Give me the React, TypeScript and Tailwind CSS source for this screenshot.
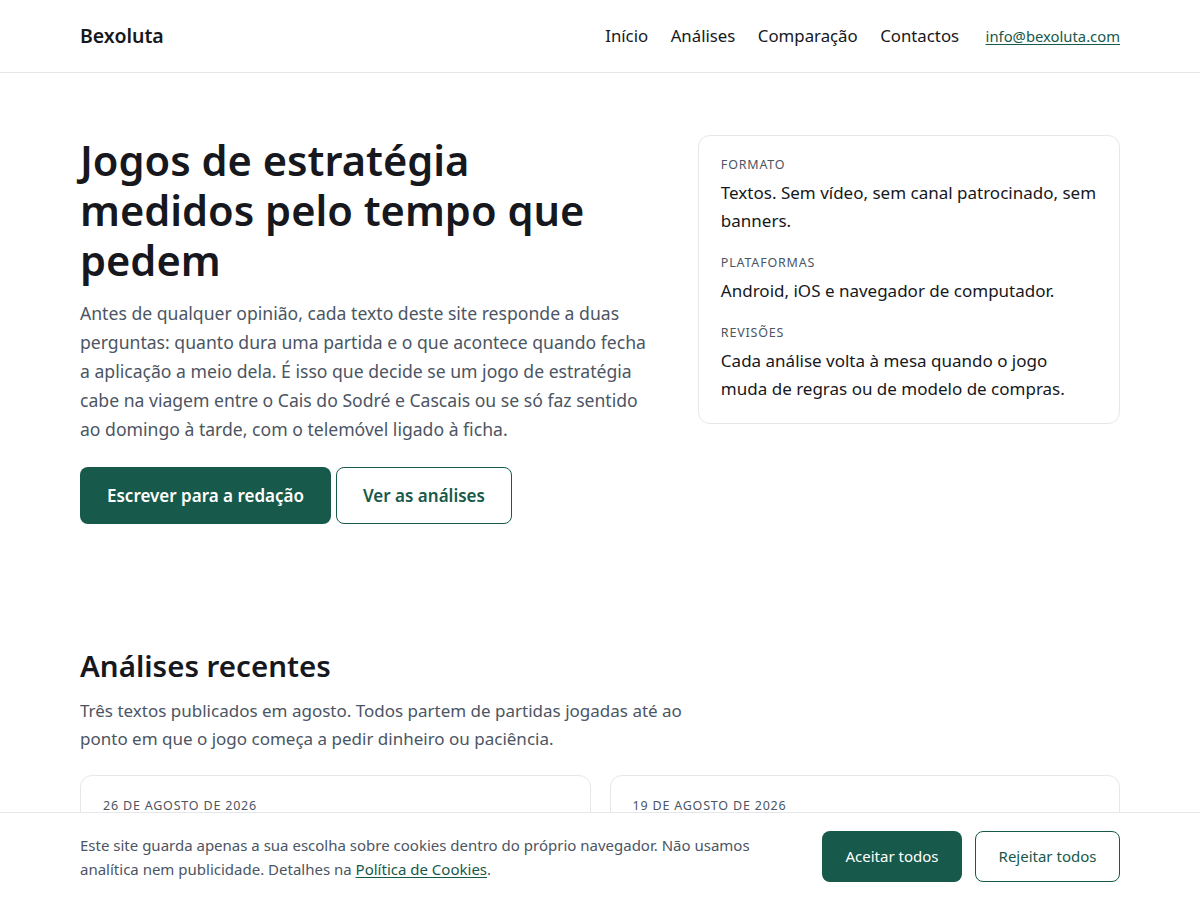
import React from "react";

export default function App() {
  const font = { fontFamily: '"Noto Sans", "Open Sans", sans-serif' };
  return (
    <div className="min-h-screen bg-white text-[#16181d]" style={font}>
      <header className="border-b border-[#e5e7eb]">
        <div className="mx-auto flex h-[72px] w-[1040px] items-center justify-between">
          <div className="text-[19.5px] font-semibold leading-none">Bexoluta</div>
          <nav className="flex items-center gap-[22.5px] text-[16.8px]">
            <a href="#">Início</a>
            <a href="#">Análises</a>
            <a href="#">Comparação</a>
            <a href="#">Contactos</a>
            <a href="#" className="ml-[4px] text-[14.8px] text-[#17594a] underline underline-offset-2">
              info@bexoluta.com
            </a>
          </nav>
        </div>
      </header>

      <main className="mx-auto w-[1040px]">
        <section className="grid grid-cols-[minmax(0,1.35fr)_minmax(0,1fr)] items-start gap-12 pt-[62px]">
          <div>
            <h1 className="text-[41.6px] font-semibold leading-[50px] text-[#16181d]">
              Jogos de estratégia medidos pelo tempo que pedem
            </h1>
            <p className="mt-[14px] text-[17.6px] leading-[29px] text-[#4b5563]">
              Antes de qualquer opinião, cada texto deste site responde a duas perguntas: quanto dura uma partida e o que acontece quando fecha a aplicação a meio dela. É isso que decide se um jogo de estratégia cabe na viagem entre o Cais do Sodré e Cascais ou se só faz sentido ao domingo à tarde, com o telemóvel ligado à ficha.
            </p>
            <div className="mt-[23px] flex gap-[5px]">
              <a href="#" className="flex h-[57px] items-center justify-center rounded-lg bg-[#17594a] px-[27px] text-[17px] font-semibold text-white">
                Escrever para a redação
              </a>
              <a href="#" className="flex h-[57px] items-center justify-center rounded-lg border border-[#17594a] px-[26px] text-[17px] font-semibold text-[#17594a]">
                Ver as análises
              </a>
            </div>
          </div>
          <aside className="rounded-xl border border-[#e5e7eb] px-[22px] pb-[20px] pt-[19px]">
            <div className="text-[12.5px] uppercase leading-[20px] tracking-[0.8px] text-[#4b5563]">Formato</div>
            <div className="mt-[4px] text-[17px] leading-[28px]">
              Textos. Sem vídeo, sem canal patrocinado, sem banners.
            </div>
            <div className="mt-[18px] text-[12.5px] uppercase leading-[20px] tracking-[0.8px] text-[#4b5563]">Plataformas</div>
            <div className="mt-[4px] text-[17px] leading-[28px]">
              Android, iOS e navegador de computador.
            </div>
            <div className="mt-[18px] text-[12.5px] uppercase leading-[20px] tracking-[0.8px] text-[#4b5563]">Revisões</div>
            <div className="mt-[4px] pr-[30px] text-[17px] leading-[28px]">
              Cada análise volta à mesa quando o jogo muda de regras ou de modelo de compras.
            </div>
          </aside>
        </section>

        <section className="pt-[124px] pb-[80px]">
          <h2 className="text-[29.5px] font-semibold leading-[36px]">Análises recentes</h2>
          <p className="mt-[13px] max-w-[620px] text-[17px] leading-[28px] text-[#4b5563]">
            Três textos publicados em agosto. Todos partem de partidas jogadas até ao ponto em que o jogo começa a pedir dinheiro ou paciência.
          </p>
          <div className="mt-[22px] grid grid-cols-2 gap-[19px]">
            <article className="h-[220px] rounded-xl border border-[#e5e7eb] px-[22px] pt-[20px]">
              <div className="text-[12.5px] uppercase leading-[20px] tracking-[0.8px] text-[#4b5563]">26 de agosto de 2026</div>
            </article>
            <article className="h-[220px] rounded-xl border border-[#e5e7eb] px-[22px] pt-[20px]">
              <div className="text-[12.5px] uppercase leading-[20px] tracking-[0.8px] text-[#4b5563]">19 de agosto de 2026</div>
            </article>
          </div>
        </section>
      </main>

      <div className="fixed bottom-0 left-0 right-0 border-t border-[#e5e7eb] bg-white">
        <div className="mx-auto flex h-[87px] w-[1040px] items-center justify-between">
          <p className="w-[690px] text-[15px] leading-[24px] text-[#4b5563]">
            Este site guarda apenas a sua escolha sobre cookies dentro do próprio navegador. Não usamos analítica nem publicidade. Detalhes na{" "}
            <a href="#" className="text-[#17594a] underline underline-offset-2">Política de Cookies</a>.
          </p>
          <div className="flex gap-[13px]">
            <button className="h-[51px] w-[140px] rounded-lg bg-[#17594a] text-[15px] text-white">Aceitar todos</button>
            <button className="h-[51px] w-[145px] rounded-lg border border-[#17594a] text-[15px] text-[#17594a]">Rejeitar todos</button>
          </div>
        </div>
      </div>
    </div>
  );
}
